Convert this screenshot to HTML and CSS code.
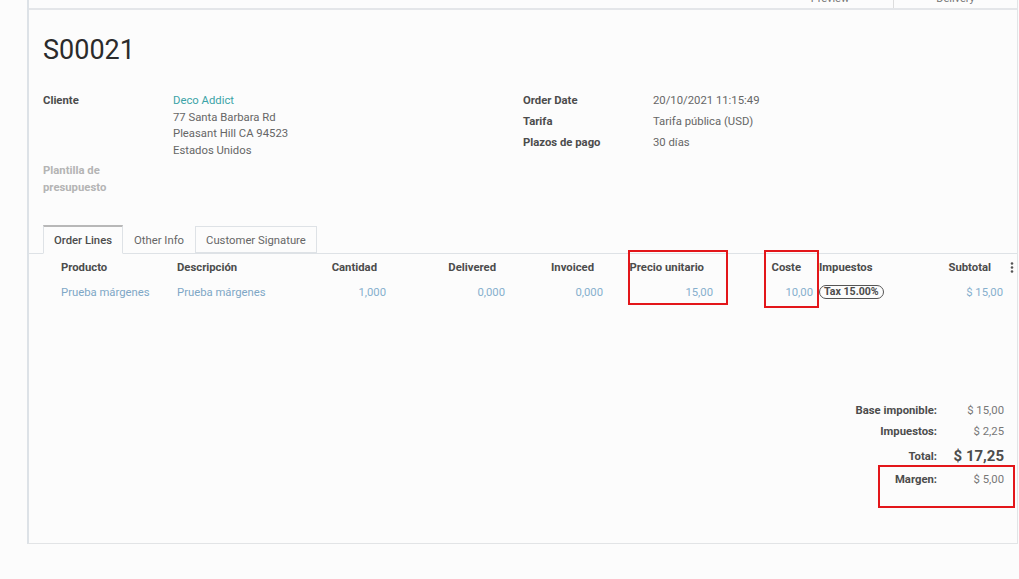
FILE: index.html
```html
<!DOCTYPE html>
<html lang="es">
<head>
    <meta charset="UTF-8">
    <title>S00021</title>
    <link rel="stylesheet" href="styles.css">
</head>
<body>
    <div class="sheet">
        <div class="statusbar">
            <span class="stat-btn preview">Preview</span>
            <span class="stat-btn delivery">Delivery</span>
        </div>

        <div class="sheet-body">
            <h1 class="title">S00021</h1>

            <div class="groups">
                <div class="group">
                    <div class="field">
                        <div class="label">Cliente</div>
                        <div class="value">
                            <a class="partner">Deco Addict</a><br>
                            77 Santa Barbara Rd<br>
                            Pleasant Hill CA 94523<br>
                            Estados Unidos
                        </div>
                    </div>
                    <div class="field">
                        <div class="label muted">Plantilla de<br>presupuesto</div>
                        <div class="value"></div>
                    </div>
                </div>
                <div class="group">
                    <div class="field row">
                        <div class="label">Order Date</div>
                        <div class="value">20/10/2021 11:15:49</div>
                    </div>
                    <div class="field row">
                        <div class="label">Tarifa</div>
                        <div class="value">Tarifa pública (USD)</div>
                    </div>
                    <div class="field row">
                        <div class="label">Plazos de pago</div>
                        <div class="value">30 días</div>
                    </div>
                </div>
            </div>

            <div class="tabs">
                <span class="tab active">Order Lines</span>
                <span class="tab">Other Info</span>
                <span class="tab bordered">Customer Signature</span>
            </div>

            <div class="lines">
                <div class="line head">
                    <div class="c first">Producto</div>
                    <div class="c">Descripción</div>
                    <div class="c num">Cantidad</div>
                    <div class="c num">Delivered</div>
                    <div class="c num">Invoiced</div>
                    <div class="c num">Precio unitario</div>
                    <div class="c num">Coste</div>
                    <div class="c tax-col">Impuestos</div>
                    <div class="c num">Subtotal</div>
                    <div class="c kebab">
                        <svg width="4" height="11" viewBox="0 0 4 11"><circle cx="2" cy="1.5" r="1.3"/><circle cx="2" cy="5.5" r="1.3"/><circle cx="2" cy="9.5" r="1.3"/></svg>
                    </div>
                </div>
                <div class="line body">
                    <div class="c first link">Prueba márgenes</div>
                    <div class="c link">Prueba márgenes</div>
                    <div class="c num">1,000</div>
                    <div class="c num">0,000</div>
                    <div class="c num">0,000</div>
                    <div class="c num">15,00</div>
                    <div class="c num">10,00</div>
                    <div class="c tax-col"><span class="badge">Tax 15.00%</span></div>
                    <div class="c num">$ 15,00</div>
                    <div class="c"></div>
                </div>
            </div>

            <div class="totals">
                <div class="t-row"><span class="t-label">Base imponible:</span><span class="t-val">$ 15,00</span></div>
                <div class="t-row"><span class="t-label">Impuestos:</span><span class="t-val">$ 2,25</span></div>
                <div class="t-row total"><span class="t-label">Total:</span><span class="t-val">$ 17,25</span></div>
                <div class="t-row margin"><span class="t-label">Margen:</span><span class="t-val">$ 5,00</span></div>
            </div>
        </div>

        <!-- red annotation boxes -->
        <div class="mark mark-price"></div>
        <div class="mark mark-cost"></div>
        <div class="mark mark-margin"></div>
    </div>
</body>
</html>
```

FILE: styles.css
```css
* {
    margin: 0;
    padding: 0;
    box-sizing: border-box;
}

body {
    font-family: "Roboto", "Liberation Sans", sans-serif;
    font-size: 11.3px;
    background: #fcfcfc;
    color: #666666;
    overflow: hidden;
}

.sheet {
    position: relative;
    margin-left: 27px;
    width: 991px;
    height: 544px;
    border-left: 2px solid #dde2e7;
    border-right: 1px solid #e2e4e6;
    border-bottom: 1px solid #e2e4e6;
    background: #fcfcfc;
    box-shadow: 0 6px 3px -3px rgba(0, 0, 0, 0.2);
}

.statusbar {
    height: 10px;
    border-bottom: 2px solid #e4e6e9;
    overflow: hidden;
    display: flex;
    justify-content: flex-end;
}

.stat-btn {
    display: block;
    margin-top: -8px;
    text-align: center;
    color: #777;
    font-size: 11px;
    line-height: 14px;
}

.preview {
    width: 126px;
}

.delivery {
    width: 124px;
    border-left: 1px solid #ddd;
}

.sheet-body {
    padding: 0 0 0 14px;
}

.title {
    margin-top: 23px;
    font-size: 27px;
    font-weight: 400;
    line-height: 34px;
    color: #2b2b2b;
}

.groups {
    display: grid;
    grid-template-columns: 480px 1fr;
    margin-top: 26px;
}

.field {
    display: flex;
    line-height: 16.5px;
    margin-bottom: 4px;
}

.field.row {
    margin-bottom: 4.5px;
}

.label {
    width: 130px;
    font-weight: bold;
    color: #4c4c4c;
}

.label.muted {
    color: #b4b4b4;
}

.value {
    color: #666666;
}

.partner {
    color: #3ba3a7;
}

.tabs {
    display: flex;
    margin-top: 25px;
    height: 29px;
    border-bottom: 1px solid #dee2e6;
    margin-left: -14px;
    padding-left: 14px;
}

.tab {
    padding: 0 10px;
    line-height: 27px;
    color: #666;
    border: 1px solid transparent;
    border-top-width: 2px;
}

.tab.active {
    color: #4c4c4c;
    font-weight: 500;
    border-color: #dee2e6;
    border-top-color: #b8b8b8;
    border-bottom: 1px solid #fcfcfc;
    margin-bottom: -1px;
}

.tab.bordered {
    border-color: #dee2e6;
    border-top-width: 1px;
    margin-top: 1px;
}

.line {
    display: grid;
    grid-template-columns: 134px 143px 69px 119px 98px 110px 100px 124px 66px 11px;
    align-items: center;
}

.line.head {
    height: 26px;
    padding-top: 1px;
    font-weight: bold;
    color: #4c4c4c;
}

.line.body {
    height: 24px;
    color: #86afcd;
}

.c {
    white-space: nowrap;
}

.c.first {
    padding-left: 18px;
}

.c.num {
    text-align: right;
    padding-right: 3px;
}

.head .c.num {
    padding-right: 12px;
}

.head .c.num:nth-child(7) {
    padding-right: 15px;
}

.head .c.num:nth-child(9) {
    padding-right: 15px;
}

.c.tax-col {
    padding-left: 3px;
}

.c.link {
    color: #7ea7c6;
}

.kebab {
    display: flex;
    justify-content: center;
}

.kebab svg {
    fill: #555;
}

.badge {
    display: inline-block;
    padding: 0 4px;
    border: 1.5px solid #555;
    border-radius: 9px;
    font-size: 10.6px;
    font-weight: bold;
    line-height: 12px;
    color: #4c4c4c;
}

.totals {
    margin-top: 96px;
    margin-left: auto;
    width: 200px;
    margin-right: 13px;
}

.t-row {
    display: flex;
    justify-content: flex-end;
    height: 21px;
    align-items: center;
}

.t-row.total {
    height: 26px;
    padding-top: 2px;
}

.t-row.margin {
    height: 23px;
}

.t-label {
    font-weight: bold;
    color: #4c4c4c;
}

.t-val {
    width: 67px;
    text-align: right;
    color: #777;
}

.total .t-val {
    font-size: 15px;
    font-weight: bold;
    color: #4c4c4c;
}

.mark {
    position: absolute;
    border: 2px solid #e3161a;
}

.mark-price {
    left: 599px;
    top: 250px;
    width: 100px;
    height: 55px;
}

.mark-cost {
    left: 735px;
    top: 250px;
    width: 55px;
    height: 58px;
}

.mark-margin {
    left: 849px;
    top: 465px;
    width: 137px;
    height: 43px;
}
```
